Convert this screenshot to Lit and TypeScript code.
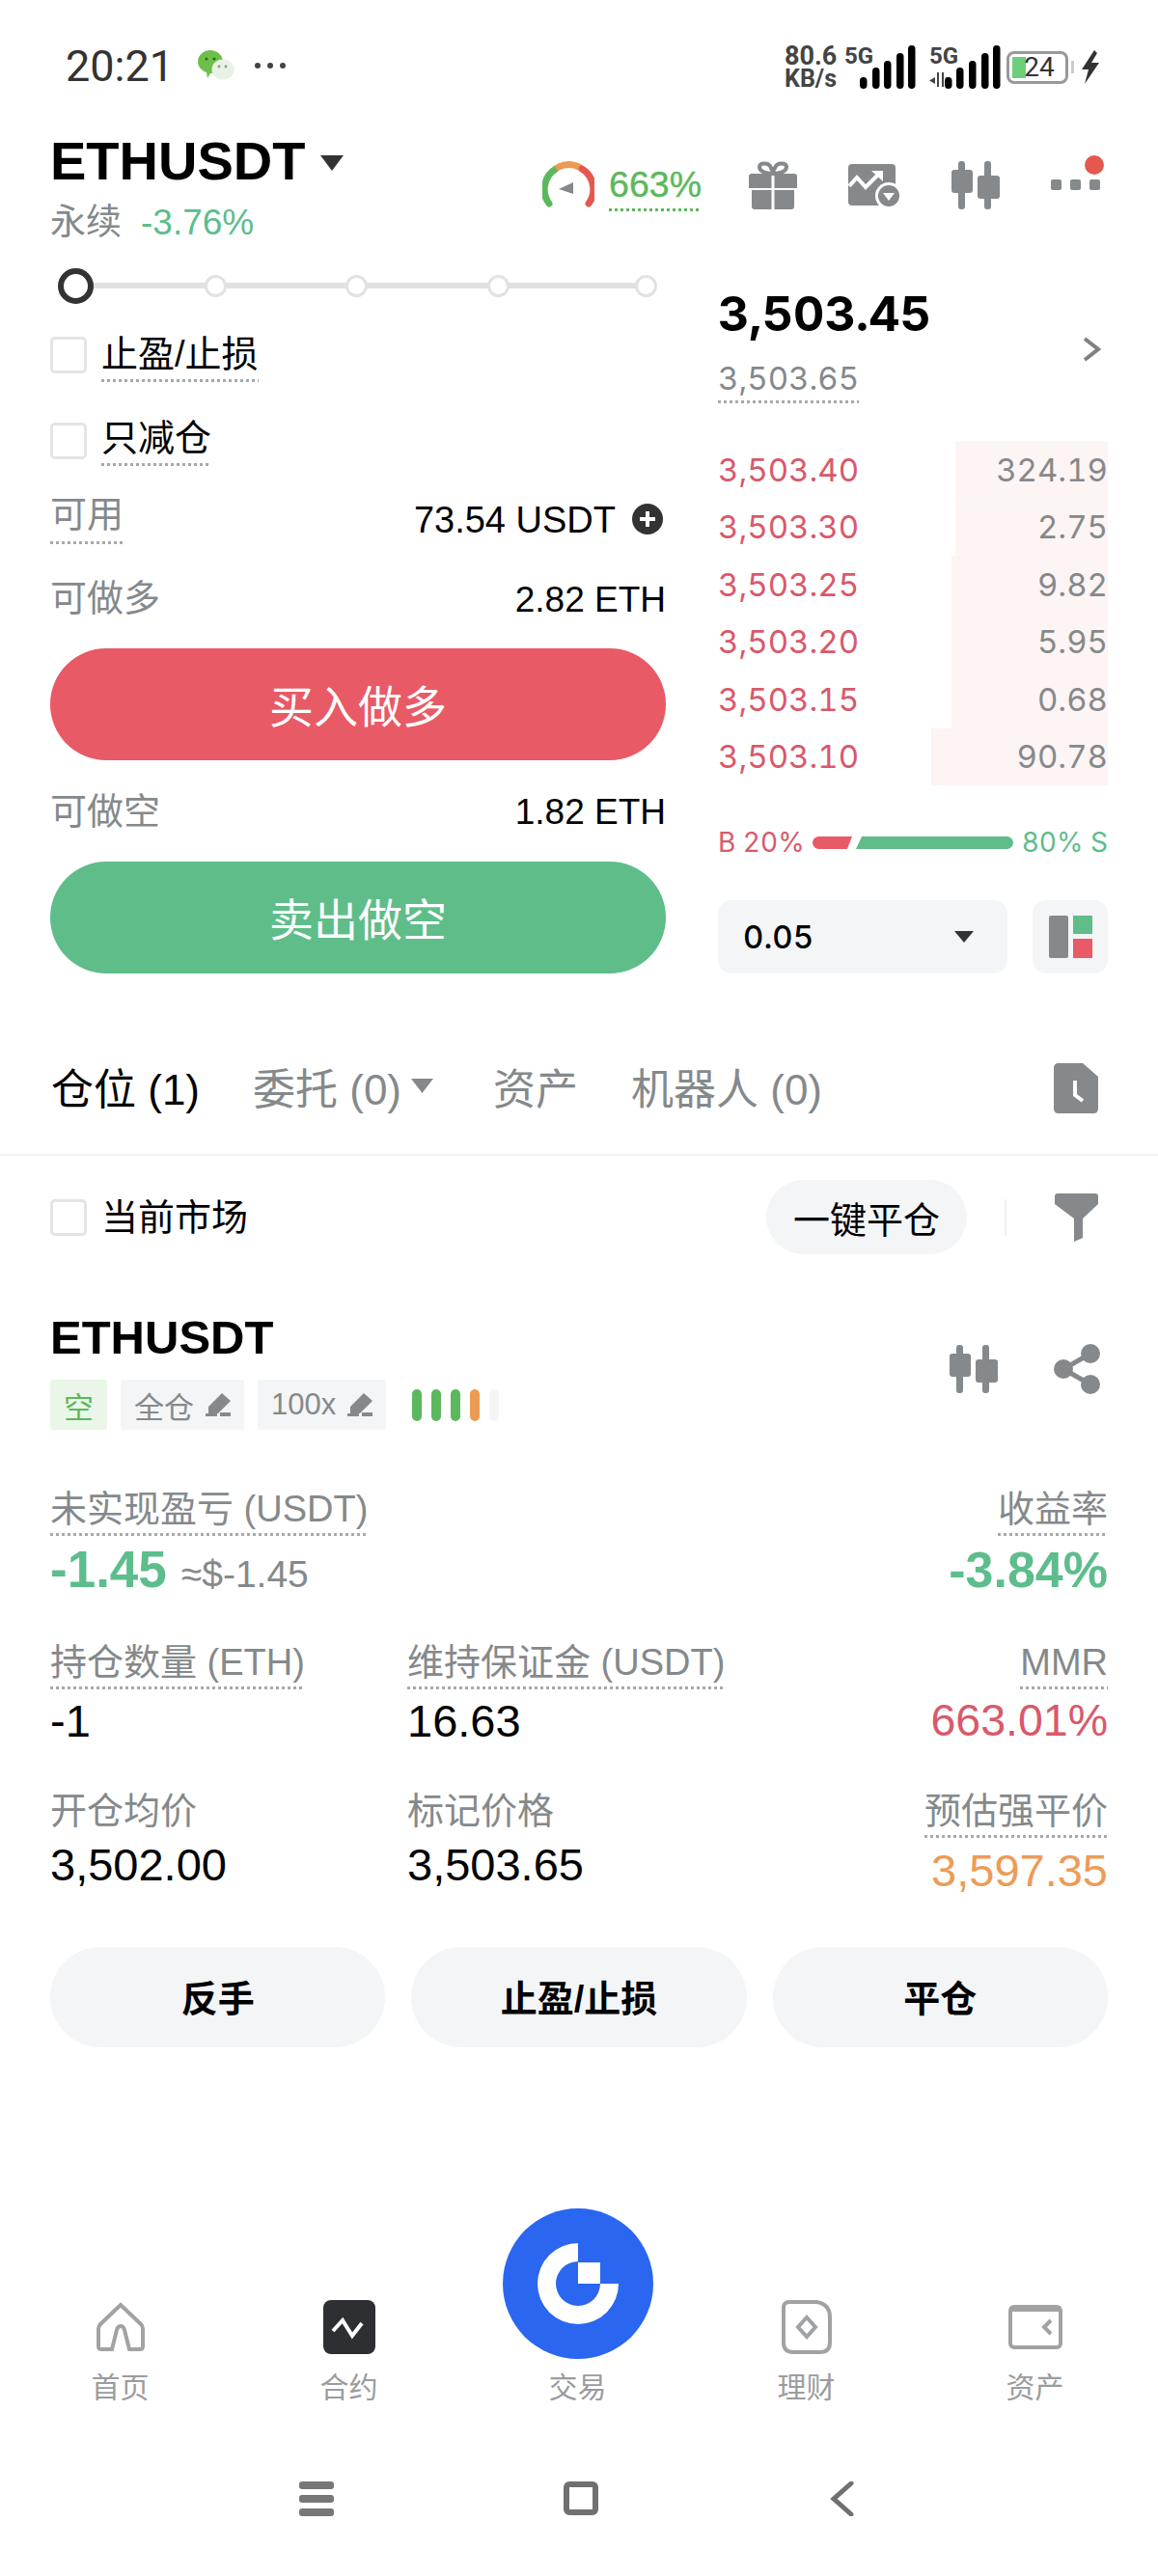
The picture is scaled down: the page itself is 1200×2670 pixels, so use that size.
import { LitElement, html, css, svg } from "lit";
import { customElement } from "lit/decorators.js";

const asks = [
  ["3,503.40", "324.19", 158],
  ["3,503.30", "2.75", 158],
  ["3,503.25", "9.82", 162],
  ["3,503.20", "5.95", 162],
  ["3,503.15", "0.68", 162],
  ["3,503.10", "90.78", 183],
] as const;

// spacing of the leverage stops, they are not quite even in the app
const stops = [0, 115, 123, 124, 130];

const signal = (bars: number[][]) =>
  bars.map(([x, top]) => svg`<rect x=${x} y=${top} width="7.5" height=${45 - top} rx="3.7" fill="#000"></rect>`);

const candles = html`<svg class="candles" viewBox="0 0 50 50" fill="#85898b">
  <rect x="7" y="0" width="7" height="50" rx="3"></rect><rect x="0" y="9" width="22" height="24" rx="3"></rect>
  <rect x="34" y="0" width="7" height="50" rx="3"></rect><rect x="27" y="15" width="23" height="24" rx="3"></rect>
</svg>`;

const pencil = html`<svg class="pencil" viewBox="0 0 26 24" fill="#85898b">
  <path d="M17 0l9 8-13 13H3v-7z"></path><rect x="15" y="20" width="11" height="4"></rect><rect x="0" y="21" width="12" height="3"></rect>
</svg>`;

@customElement("app-root")
export class AppRoot extends LitElement {
  static styles = css`
    :host {
      display: block;
      width: 1200px;
      height: 2670px;
      background: #fff;
      color: #000;
      overflow: hidden;
      font-family: "Liberation Sans", "Noto Sans CJK SC", sans-serif;
      --gray: #85898b;
      --red: #d9596a;
      --green: #5dbd8c;
      --panel: #f4f5f6;
    }
    svg { display: block; flex: none; }
    .dot {
      padding-bottom: 7px;
      background: repeating-linear-gradient(90deg, #a6a9ab 0 3px, transparent 3px 6px) left bottom / 100% 3px no-repeat;
    }
    .gray { color: var(--gray); }

    .status { height: 136px; display: flex; align-items: center; justify-content: space-between; padding: 0 60px 0 68px; box-sizing: border-box; color: #333; }
    .status-left { display: flex; align-items: center; }
    .time { font: 45px/1 Roboto, sans-serif; width: 137px; }
    .wechat { width: 38px; height: 32px; }
    .more { width: 34px; height: 6px; margin-left: 21px; }
    .status-right { display: flex; align-items: center; padding-top: 3px; }
    .speed { font: 700 27px/24px Roboto, sans-serif; color: #444; width: 62px; }
    .speed small { display: block; font-size: 25px; }
    .net { position: relative; width: 74px; height: 46px; }
    .net span { position: absolute; left: 0; top: 1px; font: 700 24px/20px Roboto, sans-serif; color: #444; }
    .net svg { width: 74px; height: 46px; }
    .net.second { margin-left: 14px; }
    .battery { width: 64px; height: 34px; box-sizing: border-box; border: 3px solid #999; border-radius: 8px; margin-left: 6px; position: relative; font: 28px/28px Roboto, sans-serif; color: #333; text-align: center; padding-left: 4px; background: linear-gradient(#6dcf7a, #6dcf7a) 3px 3px / 14px 22px no-repeat; }
    .nub { width: 3px; height: 13px; background: #c9cbcc; margin: 0 7px 0 3px; }
    .bolt { width: 20px; height: 35px; }

    .header { height: 134px; display: flex; justify-content: space-between; padding: 0 56px 0 52px; box-sizing: border-box; }
    .title { display: flex; align-items: center; gap: 16px; font: 700 56px/62px "Liberation Sans", sans-serif; }
    .title svg { width: 24px; height: 16px; margin-top: 3px; }
    .sub { display: flex; gap: 20px; margin-top: 11px; font-size: 37px; line-height: 44px; color: var(--gray); }
    .sub b { font-weight: 400; font-size: 37px; color: var(--green); }
    .actions { display: flex; gap: 53px; padding-top: 31px; align-items: flex-start; }
    .risk { display: flex; gap: 15px; margin-right: -4px; }
    .gauge { width: 54px; height: 48px; }
    .risk span { font-size: 37.5px; line-height: 48px; color: #5cb85c; height: 48px; -webkit-text-stroke: 0.4px #5cb85c; }
    .risk .dot { background-image: repeating-linear-gradient(90deg, #5cb85c 0 3px, transparent 3px 6px); padding-bottom: 7px; }
    .gift, .candles { width: 50px; height: 50px; }
    .chart { width: 54px; height: 47px; margin-top: 3px; }
    .menu { width: 55px; height: 36px; margin-top: -6px; }

    .trade { height: 790px; display: grid; grid-template-columns: 638px 404px; gap: 54px; padding-left: 52px; }
    .slider { height: 52px; position: relative; display: flex; align-items: center; padding-left: 8px; }
    .slider::before { content: ""; position: absolute; left: 30px; right: 15px; top: 23px; height: 6px; background: #dfe1e2; }
    .slider i { position: relative; box-sizing: border-box; width: 23px; height: 23px; border-radius: 50%; background: #fff; border: 3px solid #e0e2e3; }
    .slider i:first-child { width: 37px; height: 37px; border: 6px solid #333; }
    .check { display: flex; align-items: center; gap: 15px; font-size: 38px; line-height: 44px; }
    .check.first .dot { margin-top: 5px; }
    .box { width: 38px; height: 38px; box-sizing: border-box; border: 3px solid #e2e4e5; border-radius: 5px; flex: none; }
    .line { display: flex; align-items: center; justify-content: space-between; font-size: 38px; line-height: 44px; }
    .line .dot { padding-bottom: 9px; }
    .line b { font-weight: 400; font-size: 37px; display: flex; align-items: center; white-space: pre; margin-top: 3px; }
    .line .usdt { font-size: 38px; margin-right: 3px; }
    .plus { width: 32px; height: 32px; margin-left: 17px; margin-top: -2px; }
    .h92 { height: 92px; }
    .h86 { height: 86px; }
    .h74 { height: 74px; }
    .h105 { height: 105px; }
    .cta { height: 116px; box-sizing: border-box; padding-bottom: 2px; border-radius: 58px; display: flex; align-items: center; justify-content: center; color: #fff; font-size: 46px; }
    .buy { background: #e85a66; margin-top: 6px; }
    .sell { background: #5fbd8a; }

    .right { font-family: Inter, sans-serif; font-variant-numeric: tabular-nums; }
    .quote { height: 187px; display: flex; justify-content: space-between; align-items: flex-start; padding-top: 25px; box-sizing: border-box; }
    .last { font: 700 50px/60px Inter, sans-serif; font-variant-numeric: tabular-nums; }
    .mark { font-size: 33px; line-height: 44px; color: var(--gray); margin-top: 15px; }
    .mark .dot { padding-bottom: 6px; }
    .chev { width: 20px; height: 28px; margin: 53px 7px 0 0; }
    .row { height: 59.5px; display: flex; justify-content: space-between; align-items: center; font-size: 33px; color: var(--red); background: linear-gradient(#fdf4f4, #fdf4f4) right / var(--w) 100% no-repeat; }
    .row span { color: var(--gray); }
    .ratio { display: flex; align-items: center; justify-content: space-between; height: 36px; margin-top: 41px; font-size: 28px; white-space: nowrap; }
    .ratio svg { width: 208px; height: 13px; }
    .ratio .b { color: var(--red); }
    .ratio .s { color: var(--green); }
    .tools { display: flex; justify-content: space-between; margin-top: 42px; }
    .select { width: 300px; height: 76px; box-sizing: border-box; padding: 0 35px 0 26px; background: var(--panel); border-radius: 14px; display: flex; align-items: center; justify-content: space-between; font-size: 33px; font-weight: 500; }
    .select svg { width: 20px; height: 12px; }
    .layout { width: 78px; height: 76px; background: var(--panel); border-radius: 14px; display: flex; align-items: center; justify-content: center; }
    .layout svg { width: 45px; height: 44px; }

    .tabs { height: 136px; box-sizing: content-box; display: flex; align-items: center; padding: 0 62px 0 53px; border-bottom: 2px solid #f0f1f2; font-size: 44px; color: var(--gray); }
    .tabs span { margin: 0 55px 5px 0; white-space: nowrap; }
    .tabs .on { color: #000; }
    .tabs .drop { display: flex; align-items: center; gap: 10px; margin-right: 62px; }
    .drop svg { width: 23px; height: 15px; }
    .tabs .doc { width: 46px; height: 52px; margin-left: auto; }

    .filter { padding: 25px 62px 0 52px; display: flex; align-items: center; }
    .filter .check { flex: 1; }
    .pill { width: 208px; height: 77px; border-radius: 39px; background: var(--panel); font-size: 38px; display: flex; align-items: center; justify-content: center; }
    .sep { width: 2px; height: 38px; background: #f0f1f2; margin: 0 50px 0 39px; }
    .funnel { width: 45px; height: 50px; }

    .pos { display: flex; justify-content: space-between; align-items: center; padding: 56px 60px 0 52px; }
    .pos h2 { margin: 0; font: 700 49px/60px "Liberation Sans", sans-serif; }
    .tags { display: flex; align-items: center; gap: 14px; margin-top: 14px; }
    .tag { height: 52px; display: flex; align-items: center; gap: 12px; padding: 0 14px; background: var(--panel); color: var(--gray); font-size: 31px; border-radius: 3px; }
    .tag.short { background: #eaf7e8; color: #5cb85c; }
    .pencil { width: 26px; height: 24px; }
    .lev { display: flex; gap: 10px; margin-left: 13px; }
    .lev i { width: 10px; height: 33px; border-radius: 5px; }
    .pos-icons { display: flex; gap: 58px; align-items: center; }
    .share { width: 48px; height: 52px; }

    .stats { padding: 0 52px; }
    .stat-row { display: grid; grid-template-columns: 370px 1fr auto; }
    .label { font-size: 38px; line-height: 44px; color: var(--gray); white-space: nowrap; }
    .value { font-size: 47px; line-height: 60px; white-space: nowrap; }
    .end { text-align: right; }
    .big { font-weight: 700; font-size: 53px; color: var(--green); }
    .big.rate { font-size: 52px; }
    .big small { font-weight: 400; font-size: 39px; color: var(--gray); margin-left: 15px; }
    .mt11 { margin-top: 11px; }
    .mt9 { margin-top: 9px; }
    .mt8 { margin-top: 8px; }
    .mt4 { margin-top: 4px; }
    .mt10 { margin-top: 10px; }
    .danger { color: var(--red); font-size: 46.500px; }
    .warn { color: #ec9b58; }
    .r1 { margin-top: 60px; }
    .r2 { margin-top: 39px; }
    .r3 { margin-top: 41px; }

    .btns { display: grid; grid-template-columns: repeat(3, 1fr); gap: 27px; padding: 0 52px; margin-top: 49px; }
    .btns div { height: 104px; box-sizing: border-box; padding-bottom: 4px; border-radius: 52px; background: var(--panel); display: flex; align-items: center; justify-content: center; font-size: 38px; font-weight: 700; }

    .nav { margin-top: 167px; height: 211px; display: grid; grid-template-columns: repeat(5, 237px); padding-left: 6px; }
    .nav-item { display: flex; flex-direction: column; align-items: center; justify-content: flex-end; padding-bottom: 5px; font-size: 30px; line-height: 40px; color: #9a9c9e; }
    .nav-item svg { margin-bottom: 15px; width: 56px; height: 56px; }
    .nav-item .logo { width: 156px; height: 156px; margin-bottom: 10px; }

    .sys { height: 170px; box-sizing: border-box; padding: 72px 0 0 310px; display: flex; align-items: flex-start; }
    .sys svg { width: 36px; height: 36px; }
    .sys svg + svg { margin-left: 238px; }
  `;

  render() {
    return html`
      <div class="status">
        <div class="status-left">
          <div class="time">20:21</div>
          <svg class="wechat" viewBox="0 0 38 32">
            <path d="M13 0c7 0 13 5 13 12s-6 12-13 12l-3 5-1-6C4 21 0 17 0 12 0 5 6 0 13 0z" fill="#6cc04a"></path>
            <circle cx="9" cy="9" r="1.6" fill="#2e6b1e"></circle><circle cx="17" cy="9" r="1.6" fill="#2e6b1e"></circle>
            <ellipse cx="26" cy="20" rx="11.5" ry="10.5" fill="#e9f1e4"></ellipse>
            <circle cx="22" cy="17" r="1.4" fill="#8a9a82"></circle><circle cx="29" cy="17" r="1.4" fill="#8a9a82"></circle>
          </svg>
          <svg class="more" viewBox="0 0 34 6" fill="#444"><circle cx="3" cy="3" r="3"></circle><circle cx="16" cy="3" r="3"></circle><circle cx="29" cy="3" r="3"></circle></svg>
        </div>
        <div class="status-right">
          <div class="speed">80.6<small>KB/s</small></div>
          <div class="net">
            <span>5G</span>
            <svg viewBox="0 0 74 46">${signal([[16, 33], [29, 23], [41, 16], [54, 8], [66, 0]])}</svg>
          </div>
          <div class="net second">
            <span>5G</span>
            <svg viewBox="0 0 74 46">
              <path d="M6 33l-6 3.5 6 3.500zM8 28h2v15H8zM13 28h2v15h-2zM17 33l6 3.500-6 3.500z" fill="#444"></path>
              ${signal([[16, 33], [28, 23], [41, 16], [54, 8], [66, 0]])}
            </svg>
          </div>
          <div class="battery">24</div>
          <div class="nub"></div>
          <svg class="bolt" viewBox="0 0 20 35" fill="#333"><path d="M14 0L1 20h7l-4 15L19 13h-8l6-10z"></path></svg>
        </div>
      </div>

      <div class="header">
        <div>
          <div class="title">ETHUSDT <svg viewBox="0 0 24 16" fill="#333"><path d="M0 0h24L12 16z"></path></svg></div>
          <div class="sub">永续 <b>-3.76%</b></div>
        </div>
        <div class="actions">
          <div class="risk">
            <svg class="gauge" viewBox="0 0 54 48" fill="none" stroke-width="7" stroke-linecap="round">
              <path d="M7 44A25 25 0 0 1 14 8" stroke="#5cb85c"></path>
              <path d="M17 6A25 25 0 0 1 38 6" stroke="#ec9b52"></path>
              <path d="M41 8A25 25 0 0 1 48 44" stroke="#e5584f"></path>
              <path d="M17 29l15-7v12z" fill="#85898b" stroke="none"></path>
            </svg>
            <span><span class="dot">663%</span></span>
          </div>
          <svg class="gift" viewBox="0 0 50 50" fill="#85898b">
            <path d="M0 16q0-3 3-3h20.500v15H0zM26.500 13H47q3 0 3 3v12H26.500zM3 30h20.500v20H6q-3 0-3-3zM26.500 30H47v17q0 3-3 3H26.500z"></path>
            <path d="M25 13C18 13 11 11 11 6c0-4 8-5 11-1l3 6 3-6c3-4 11-3 11 1 0 5-7 7-14 7z" fill="none" stroke="#85898b" stroke-width="4"></path>
          </svg>
          <svg class="chart" viewBox="0 0 54 47">
            <rect width="49" height="43" rx="4" fill="#85898b"></rect>
            <path d="M1 23l8-9 9 10 15-15" fill="none" stroke="#fff" stroke-width="4"></path>
            <path d="M24 7h12v11z" fill="#fff"></path>
            <circle cx="42" cy="33" r="14" fill="#fff"></circle><circle cx="42" cy="33" r="11" fill="#85898b"></circle>
            <path d="M36 30h12l-6 8z" fill="#fff"></path>
          </svg>
          ${candles}
          <svg class="menu" viewBox="0 0 55 36" fill="#85898b">
            <rect x="0" y="25" width="11" height="11" rx="2"></rect><rect x="20" y="25" width="11" height="11" rx="2"></rect><rect x="40" y="25" width="11" height="11" rx="2"></rect>
            <circle cx="45" cy="10" r="10" fill="#e5584f"></circle>
          </svg>
        </div>
      </div>

      <div class="trade">
        <div>
          <div class="slider">${stops.map((m) => html`<i style="margin-left:${m}px"></i>`)}</div>
          <div class="check first h92"><div class="box"></div><span class="dot">止盈/止损</span></div>
          <div class="check h86"><div class="box"></div><span class="dot">只减仓</span></div>
          <div class="line h74">
            <span class="gray dot">可用</span>
            <b class="usdt">73.54 USDT<svg class="plus" viewBox="0 0 32 32"><circle cx="16" cy="16" r="16" fill="#333"></circle><path d="M16 8v16M8 16h16" stroke="#fff" stroke-width="4"></path></svg></b>
          </div>
          <div class="line h92"><span class="gray">可做多</span><b>2.82 ETH</b></div>
          <div class="cta buy">买入做多</div>
          <div class="line h105"><span class="gray">可做空</span><b>1.82 ETH</b></div>
          <div class="cta sell">卖出做空</div>
        </div>
        <div class="right">
          <div class="quote">
            <div>
              <div class="last">3,503.45</div>
              <div class="mark"><span class="dot">3,503.65</span></div>
            </div>
            <svg class="chev" viewBox="0 0 20 28" fill="none" stroke="#808080" stroke-width="4"><path d="M3 3l14 11L3 25"></path></svg>
          </div>
          ${asks.map(([price, size, w]) => html`<div class="row" style="--w:${w}px">${price}<span>${size}</span></div>`)}
          <div class="ratio">
            <span class="b">B 20%</span>
            <svg viewBox="0 0 208 13">
              <path d="M6.500 0H41l-5 13H6.500a6.500 6.500 0 0 1 0-13z" fill="#e85a66"></path>
              <path d="M51 0h150.500a6.500 6.500 0 0 1 0 13H45z" fill="#5fbd8a"></path>
            </svg>
            <span class="s">80% S</span>
          </div>
          <div class="tools">
            <div class="select">0.05 <svg viewBox="0 0 20 12" fill="#333"><path d="M0 0h20L10 12z"></path></svg></div>
            <div class="layout">
              <svg viewBox="0 0 45 44">
                <rect width="20" height="44" rx="2" fill="#85898b"></rect>
                <rect x="25" width="20" height="19" fill="#5fbd8a"></rect>
                <rect x="25" y="24" width="20" height="20" fill="#e85a66"></rect>
              </svg>
            </div>
          </div>
        </div>
      </div>

      <div class="tabs">
        <span class="on">仓位 (1)</span>
        <span class="drop">委托 (0)<svg viewBox="0 0 23 15" fill="#85898b"><path d="M0 0h23L11.500 15z"></path></svg></span>
        <span>资产</span>
        <span>机器人 (0)</span>
        <svg class="doc" viewBox="0 0 46 52">
          <path d="M5 0h25l16 14v33q0 5-5 5H5q-5 0-5-5V5q0-5 5-5z" fill="#85898b"></path>
          <path d="M22 18v15l8 6" fill="none" stroke="#fff" stroke-width="4"></path>
        </svg>
      </div>

      <div class="filter">
        <div class="check"><div class="box"></div>当前市场</div>
        <div class="pill">一键平仓</div>
        <div class="sep"></div>
        <svg class="funnel" viewBox="0 0 45 50" fill="#85898b"><path d="M3 0h39q3 0 3 3v8L29 26v20l-9 4V26L0 11V3q0-3 3-3z"></path></svg>
      </div>

      <div class="pos">
        <div>
          <h2>ETHUSDT</h2>
          <div class="tags">
            <div class="tag short">空</div>
            <div class="tag">全仓 ${pencil}</div>
            <div class="tag">100x ${pencil}</div>
            <div class="lev">
              ${["#5cb85c", "#5cb85c", "#5cb85c", "#ec9b52", "#f4f5f6"].map((c) => html`<i style="background:${c}"></i>`)}
            </div>
          </div>
        </div>
        <div class="pos-icons">
          ${candles}
          <svg class="share" viewBox="0 0 48 52" fill="#85898b">
            <circle cx="38" cy="10" r="10"></circle><circle cx="10" cy="26" r="10"></circle><circle cx="38" cy="42" r="10"></circle>
            <path d="M38 10L10 26l28 16" fill="none" stroke="#85898b" stroke-width="5"></path>
          </svg>
        </div>
      </div>

      <div class="stats">
        <div class="stat-row r1">
          <div style="grid-column:span 2">
            <div class="label"><span class="dot">未实现盈亏 (USDT)</span></div>
            <div class="value big mt11">-1.45<small>≈$-1.45</small></div>
          </div>
          <div class="end">
            <div class="label"><span class="dot">收益率</span></div>
            <div class="value big rate mt11">-3.84%</div>
          </div>
        </div>
        <div class="stat-row r2">
          <div><div class="label"><span class="dot">持仓数量 (ETH)</span></div><div class="value mt9">-1</div></div>
          <div><div class="label"><span class="dot">维持保证金 (USDT)</span></div><div class="value mt9">16.63</div></div>
          <div class="end"><div class="label"><span class="dot">MMR</span></div><div class="value mt8 danger">663.01%</div></div>
        </div>
        <div class="stat-row r3">
          <div><div class="label">开仓均价</div><div class="value mt4">3,502.00</div></div>
          <div><div class="label">标记价格</div><div class="value mt4">3,503.65</div></div>
          <div class="end"><div class="label"><span class="dot">预估强平价</span></div><div class="value mt10 warn">3,597.35</div></div>
        </div>
      </div>

      <div class="btns"><div>反手</div><div>止盈/止损</div><div>平仓</div></div>

      <div class="nav">
        <div class="nav-item">
          <svg viewBox="0 0 56 56" fill="none" stroke="#a0a2a4" stroke-width="4">
            <path d="M28 5L49 25q2 2 2 5v18q0 3-3 3H37L32 31q-1-4-4-4t-4 4L19 51H8q-3 0-3-3V30q0-3 2-5z"></path>
          </svg>
          首页
        </div>
        <div class="nav-item">
          <svg viewBox="0 0 56 56">
            <rect x="1" y="0" width="54" height="56" rx="8" fill="#2e2f33"></rect>
            <path d="M11 32l10-11 10 16 10-13" fill="none" stroke="#fff" stroke-width="4"></path>
          </svg>
          合约
        </div>
        <div class="nav-item">
          <svg class="logo" viewBox="0 0 156 156">
            <circle cx="78" cy="78" r="78" fill="#2a66f0"></circle>
            <path d="M78 36A42 42 0 1 0 120 78H78z" fill="#fff"></path>
            <path d="M78 55A23 23 0 1 0 101 78H78z" fill="#2a66f0"></path>
            <rect x="78" y="56" width="23" height="22" fill="#fff"></rect>
          </svg>
          交易
        </div>
        <div class="nav-item">
          <svg viewBox="0 0 56 56" fill="none" stroke="#a0a2a4" stroke-width="4">
            <path d="M10 2H38Q52 4 52 18V44Q52 54 42 54H14Q4 54 4 44V8Q4 2 10 2Z"></path>
            <path d="M28 18l9 10-9 10-9-10z" stroke-width="4"></path>
          </svg>
          理财
        </div>
        <div class="nav-item">
          <svg viewBox="0 0 56 56" fill="none" stroke="#a0a2a4" stroke-width="4">
            <rect x="2" y="7" width="52" height="42" rx="4"></rect>
            <path d="M2 9h52" stroke-width="6"></path>
            <path d="M44 21l-7 7 7 7"></path>
          </svg>
          资产
        </div>
      </div>

      <div class="sys">
        <svg viewBox="0 0 36 36" fill="#777"><rect width="36" height="8" rx="3"></rect><rect y="14" width="36" height="8" rx="3"></rect><rect y="28" width="36" height="8" rx="3"></rect></svg>
        <svg viewBox="0 0 36 36" fill="none" stroke="#707070" stroke-width="6"><rect x="3" y="3" width="30" height="29" rx="3"></rect></svg>
        <svg viewBox="0 0 36 36" fill="none" stroke="#707070" stroke-width="5" stroke-linecap="round"><path d="M24 2L6 18l18 16"></path></svg>
      </div>
    `;
  }
}
